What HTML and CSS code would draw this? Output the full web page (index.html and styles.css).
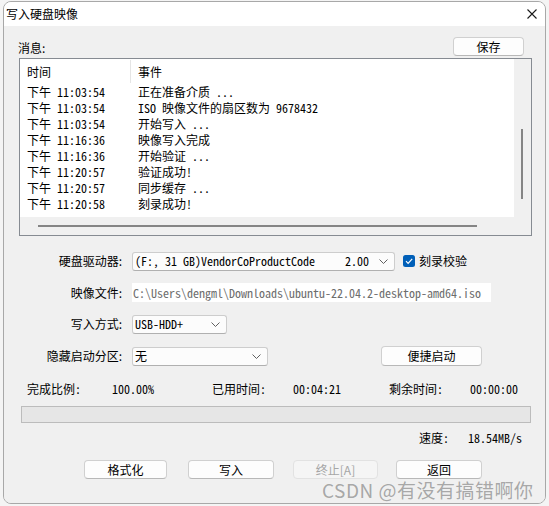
FILE: index.html
```html
<!DOCTYPE html>
<html lang="zh-CN">
<head>
<meta charset="utf-8">
<title>写入硬盘映像</title>
<link rel="stylesheet" href="styles.css">
</head>
<body>
<div class="dialog">
  <div class="titlebar">
    <span class="title">写入硬盘映像</span>
    <svg class="close" width="10" height="10" viewBox="0 0 10 10"><path d="M0.5 0.5 L9.5 9.5 M9.5 0.5 L0.5 9.5" stroke="#1a1a1a" stroke-width="1.1" fill="none"/></svg>
  </div>
  <div class="body">
    <div class="msg-row">
      <span class="msg-label">消息:</span>
      <button class="btn save">保存</button>
    </div>
    <div class="list">
      <div class="list-main">
        <div class="list-view">
          <div class="lv-head"><span class="c1">时间</span><span class="sep"></span><span class="c2">事件</span></div>
          <div class="lv-row m"><span class="c1">下午 11:03:54</span><span class="c2">正在准备介质 ...</span></div>
          <div class="lv-row m"><span class="c1">下午 11:03:54</span><span class="c2">ISO 映像文件的扇区数为 9678432</span></div>
          <div class="lv-row m"><span class="c1">下午 11:03:54</span><span class="c2">开始写入 ...</span></div>
          <div class="lv-row m"><span class="c1">下午 11:16:36</span><span class="c2">映像写入完成</span></div>
          <div class="lv-row m"><span class="c1">下午 11:16:36</span><span class="c2">开始验证 ...</span></div>
          <div class="lv-row m"><span class="c1">下午 11:20:57</span><span class="c2">验证成功!</span></div>
          <div class="lv-row m"><span class="c1">下午 11:20:57</span><span class="c2">同步缓存 ...</span></div>
          <div class="lv-row m"><span class="c1">下午 11:20:58</span><span class="c2">刻录成功!</span></div>
        </div>
        <div class="vscroll"><div class="vthumb"></div></div>
      </div>
      <div class="hscroll"><div class="hthumb"></div></div>
    </div>

    <div class="frow r1">
      <span class="flabel">硬盘驱动器:</span>
      <div class="combo drive"><span class="ctext m">(F:, 31 GB)VendorCoProductCode     2.00</span><svg class="chev" width="9" height="5" viewBox="0 0 9 5"><path d="M0.5 0.5 L4.5 4.5 L8.5 0.5" stroke="#606060" fill="none"/></svg></div>
      <span class="check"><svg width="12" height="12" viewBox="0 0 12 12"><rect width="12" height="12" rx="2.5" fill="#005fb8"/><path d="M3 6.2 L5.1 8.3 L9.2 3.9" stroke="#fff" stroke-width="1.2" fill="none"/></svg></span>
      <span class="check-label">刻录校验</span>
    </div>
    <div class="frow r2">
      <span class="flabel">映像文件:</span>
      <div class="path m">C:\Users\dengml\Downloads\ubuntu-22.04.2-desktop-amd64.iso</div>
    </div>
    <div class="frow r3">
      <span class="flabel">写入方式:</span>
      <div class="combo mode"><span class="ctext m">USB-HDD+</span><svg class="chev" width="9" height="5" viewBox="0 0 9 5"><path d="M0.5 0.5 L4.5 4.5 L8.5 0.5" stroke="#606060" fill="none"/></svg></div>
    </div>
    <div class="frow r4">
      <span class="flabel">隐藏启动分区:</span>
      <div class="combo hide"><span class="ctext">无</span><svg class="chev" width="9" height="5" viewBox="0 0 9 5"><path d="M0.5 0.5 L4.5 4.5 L8.5 0.5" stroke="#606060" fill="none"/></svg></div>
      <button class="btn quick">便捷启动</button>
    </div>

    <div class="stats m">
      <span class="s1">完成比例:</span>
      <span class="s2">100.00%</span>
      <span class="s3">已用时间:</span>
      <span class="s4">00:04:21</span>
      <span class="s5">剩余时间:</span>
      <span class="s6">00:00:00</span>
    </div>
    <div class="progress"></div>
    <div class="speed m"><span class="sp-label">速度:</span><span>18.54MB/s</span></div>
    <div class="actions">
      <button class="btn a1">格式化</button>
      <button class="btn a2">写入</button>
      <button class="btn a3 disabled">终止[A]</button>
      <button class="btn a4">返回</button>
    </div>
    <div class="watermark">CSDN @有没有搞错啊你</div>
  </div>
</div>
</body>
</html>
```

FILE: styles.css
```css
body {
  margin: 0;
  background: #f4f4f4;
  font-family: "Noto Sans CJK SC", "Microsoft YaHei", sans-serif;
  font-size: 12px;
  color: #000;
}

.m {
  font-family: "Noto Sans Mono CJK SC", "Noto Sans CJK SC", monospace;
}

.dialog {
  box-sizing: border-box;
  width: 543px;
  height: 503px;
  margin: 1px 0 0 3px;
  border: 1px solid #a8a8a8;
  border-radius: 8px;
  overflow: hidden;
  display: flex;
  flex-direction: column;
  background: #f0f0f0;
}

.titlebar {
  height: 24px;
  flex: none;
  background: #fff;
  display: flex;
  align-items: center;
  padding-left: 2px;
}

.title {
  line-height: 14px;
  margin-top: -1px;
}

.close {
  margin-left: auto;
  margin-right: 8px;
}

.body {
  flex: 1;
  position: relative;
  background: #f0f0f0;
}

.msg-row {
  display: flex;
  align-items: flex-start;
  padding-top: 11px;
  padding-left: 14px;
}

.msg-label {
  line-height: 14px;
  margin-top: 4px;
}

.btn {
  box-sizing: border-box;
  height: 19px;
  padding: 0;
  border: 1px solid #d0d0d0;
  border-bottom-color: #b8b8b8;
  border-radius: 4px;
  background: #fdfdfd;
  font-family: "Noto Sans CJK SC", sans-serif;
  font-size: 12px;
  line-height: 14px;
  color: #000;
  display: flex;
  align-items: center;
  justify-content: center;
}

.save {
  width: 71px;
  margin-left: auto;
  margin-right: 21px;
}

.list {
  box-sizing: border-box;
  width: 513px;
  height: 178px;
  margin: 2px 0 0 15px;
  border: 1px solid #868b92;
  display: flex;
  flex-direction: column;
}

.list-main {
  display: flex;
  height: 158px;
}

.list-view {
  width: 494px;
  background: #fff;
}

.lv-head {
  height: 25px;
  display: flex;
  align-items: center;
  line-height: 14px;
}

.lv-head .c1 {
  width: 103px;
  padding-left: 7px;
}

.lv-head .sep {
  width: 1px;
  height: 23px;
  background: #e5e5e5;
  align-self: flex-start;
  margin-top: 1px;
}

.lv-head .c2 {
  padding-left: 7px;
}

.lv-row {
  height: 16px;
  display: flex;
  align-items: center;
  line-height: 14px;
  white-space: pre;
}

.lv-row .c1 {
  width: 111px;
  padding-left: 7px;
}

.vscroll {
  width: 17px;
  background: #f0f0f0;
}

.vthumb {
  width: 2px;
  height: 70px;
  margin: 70px 0 0 7px;
  background: #858585;
}

.hscroll {
  flex: 1;
  background: #f0f0f0;
}

.hthumb {
  width: 439px;
  height: 2px;
  margin: 8px 0 0 18px;
  background: #858585;
}

.frow {
  display: flex;
  align-items: center;
  height: 32px;
}

.frow.r1 {
  margin-top: 9px;
}

.frow.r2 {
  height: 31px;
}

.flabel {
  width: 118px;
  margin-right: 10px;
  text-align: right;
  line-height: 14px;
}

.combo {
  box-sizing: border-box;
  height: 19px;
  border: 1px solid #cdcdcd;
  border-bottom-color: #b0b0b0;
  border-radius: 3px;
  background: #fcfcfc;
  display: flex;
  align-items: center;
  padding: 0 6px 0 2px;
}

.ctext {
  flex: 1;
  white-space: pre;
  line-height: 14px;
}

.chev {
  flex: none;
}

.drive {
  width: 263px;
}

.check {
  display: flex;
  margin-left: 8px;
}

.check-label {
  margin-left: 4px;
  line-height: 14px;
}

.path {
  box-sizing: border-box;
  width: 359px;
  height: 19px;
  background: #fff;
  color: #6d6d6d;
  padding-left: 1px;
  line-height: 19px;
  white-space: pre;
}

.mode {
  width: 95px;
}

.hide {
  width: 136px;
}

.quick {
  width: 101px;
  height: 20px;
  margin-left: 113px;
}

.stats {
  display: flex;
  align-items: center;
  height: 18px;
  margin-top: 8px;
  padding-left: 23px;
  line-height: 14px;
  white-space: pre;
}

.s1 { width: 85px; }
.s2 { width: 100px; }
.s3 { width: 81px; }
.s4 { width: 96px; }
.s5 { width: 81px; }

.progress {
  box-sizing: border-box;
  width: 510px;
  height: 17px;
  margin: 8px 0 0 17px;
  border: 1px solid #bcbcbc;
  background: #e6e6e6;
}

.speed {
  display: flex;
  align-items: center;
  height: 16px;
  margin-top: 7px;
  padding-left: 415px;
  line-height: 14px;
}

.sp-label {
  width: 49px;
}

.actions {
  display: flex;
  margin-top: 14px;
  padding-left: 80px;
}

.a1 { width: 83px; }
.a2 { width: 86px; margin-left: 21px; }
.a3 { width: 85px; margin-left: 19px; }
.a4 { width: 86px; margin-left: 18px; }

.btn.disabled {
  background: #f5f5f5;
  border-color: #e2e2e2;
  color: #a6a6a6;
}

.watermark {
  position: absolute;
  left: 318px;
  top: 454px;
  font-family: "Noto Sans CJK SC", sans-serif;
  font-size: 19px;
  line-height: 19px;
  color: rgba(120, 120, 120, 0.62);
  white-space: nowrap;
  letter-spacing: 0.5px;
}
```
